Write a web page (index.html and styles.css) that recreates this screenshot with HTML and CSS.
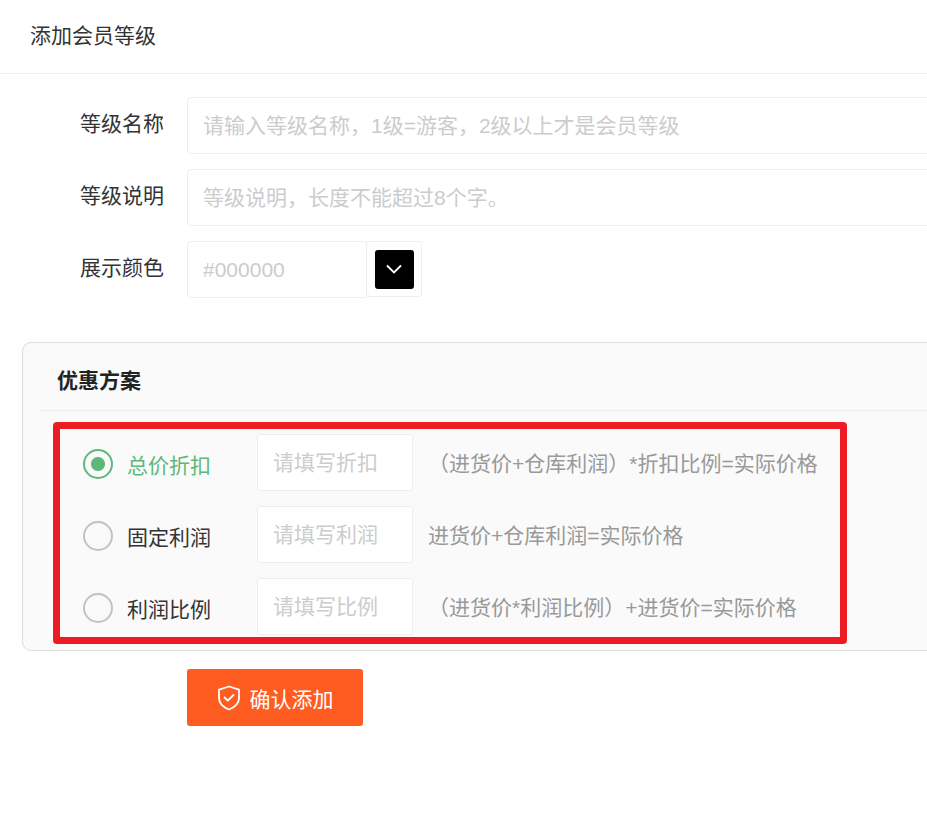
FILE: index.html
```html
<!DOCTYPE html>
<html lang="zh-CN">

<head>
    <meta charset="UTF-8">
    <meta name="viewport" content="width=device-width, initial-scale=1.0">
    <title>添加会员等级</title>
    <link rel="stylesheet" href="styles.css">
</head>

<body>
    <div class="page">
        <div class="page-title">添加会员等级</div>

        <form class="level-form">
            <div class="field">
                <label class="field-label">等级名称</label>
                <input class="text-input" type="text" placeholder="请输入等级名称，1级=游客，2级以上才是会员等级">
            </div>
            <div class="field">
                <label class="field-label">等级说明</label>
                <input class="text-input" type="text" placeholder="等级说明，长度不能超过8个字。">
            </div>
            <div class="field">
                <label class="field-label">展示颜色</label>
                <input class="text-input color-input" type="text" placeholder="#000000">
                <div class="color-picker">
                    <div class="color-swatch">
                        <svg width="16" height="10" viewBox="0 0 16 10" fill="none" stroke="#fff" stroke-width="1.8">
                            <path d="M1 1.5l7 7 7-7" />
                        </svg>
                    </div>
                </div>
            </div>

            <div class="plan-card">
                <div class="plan-title">优惠方案</div>
                <div class="plan-rows">
                    <div class="plan-row">
                        <div class="plan-option active">
                            <span class="radio"></span>
                            <span>总价折扣</span>
                        </div>
                        <input class="text-input plan-input" type="text" placeholder="请填写折扣">
                        <span class="plan-hint">（进货价+仓库利润）*折扣比例=实际价格</span>
                    </div>
                    <div class="plan-row">
                        <div class="plan-option">
                            <span class="radio"></span>
                            <span>固定利润</span>
                        </div>
                        <input class="text-input plan-input" type="text" placeholder="请填写利润">
                        <span class="plan-hint">进货价+仓库利润=实际价格</span>
                    </div>
                    <div class="plan-row">
                        <div class="plan-option">
                            <span class="radio"></span>
                            <span>利润比例</span>
                        </div>
                        <input class="text-input plan-input" type="text" placeholder="请填写比例">
                        <span class="plan-hint">（进货价*利润比例）+进货价=实际价格</span>
                    </div>
                </div>
                <div class="highlight-box"></div>
            </div>

            <button class="submit-button" type="button">
                <svg width="24" height="26" viewBox="0 0 24 26" fill="none" stroke="#fff" stroke-width="1.8" stroke-linejoin="round" stroke-linecap="round">
                    <path d="M12 1.5l10 3.2v8.3c0 5.6-4.6 9.4-10 11.5C6.6 22.400 2 18.600 2 13V4.700z" />
                    <path d="M7.500 12.500l3.300 3.200 5.700-5.700" />
                </svg>
                <span>确认添加</span>
            </button>
        </form>
    </div>
</body>

</html>
```

FILE: styles.css
```css
* {
    margin: 0;
    padding: 0;
    box-sizing: border-box;
}

body {
    font-family: "Liberation Sans", "Noto Sans CJK SC", sans-serif;
    font-size: 21px;
    color: #333;
    background: #fff;
    overflow: hidden;
}

.page {
    width: 1200px;
}

.page-title {
    height: 74px;
    padding-left: 30px;
    line-height: 71px;
    border-bottom: 1px solid #eee;
}

.level-form {
    padding-top: 23px;
}

.field {
    display: flex;
    margin-bottom: 15px;
}

.field-label {
    width: 164px;
    margin-right: 23px;
    text-align: right;
    line-height: 54px;
}

.text-input {
    height: 57px;
    flex: 1;
    padding: 0 15px;
    font-family: inherit;
    font-size: 21px;
    color: #333;
    background: #fff;
    border: 1px solid #eee;
    border-radius: 3px;
    outline: none;
}

.text-input::placeholder {
    color: #ccc;
    opacity: 1;
}

.color-input {
    flex: none;
    width: 180px;
}

.color-picker {
    display: flex;
    justify-content: center;
    align-items: center;
    width: 56px;
    height: 56px;
    margin-left: -1px;
    border: 1px solid #eee;
    border-radius: 3px;
}

.color-swatch {
    display: flex;
    justify-content: center;
    align-items: center;
    width: 39px;
    height: 39px;
    background: #000;
    border-radius: 3px;
}

.plan-card {
    position: relative;
    margin: 44px 0 0 22px;
    background: #fafafa;
    border: 1px solid #ddd;
    border-radius: 9px;
    padding-bottom: 15px;
}

.plan-title {
    height: 68px;
    margin-left: 15px;
    padding-left: 19px;
    line-height: 76px;
    font-weight: bold;
    color: #222;
    border-bottom: 1px solid #eee;
}

.plan-rows {
    display: flex;
    flex-direction: column;
    gap: 15px;
    padding-top: 23px;
}

.plan-row {
    display: flex;
    align-items: center;
}

.plan-option {
    display: flex;
    align-items: center;
    gap: 14px;
    width: 174px;
    margin-left: 60px;
    margin-top: 3px;
}

.plan-option.active {
    color: #5fb878;
}

.radio {
    width: 30px;
    height: 30px;
    border: 2px solid #c2c2c2;
    border-radius: 50%;
}

.active .radio {
    border-color: #5fb878;
    background: radial-gradient(circle, #5fb878 0 6.500px, transparent 7.500px);
}

.plan-input {
    flex: none;
    width: 156px;
}

.plan-hint {
    margin-left: 15px;
    margin-top: -2px;
    color: #999;
}

.highlight-box {
    position: absolute;
    left: 30px;
    top: 79px;
    width: 794px;
    height: 222px;
    border: 7px solid #ed1c24;
    border-radius: 4px;
}

.submit-button {
    display: flex;
    justify-content: center;
    align-items: center;
    gap: 9px;
    width: 176px;
    height: 57px;
    margin: 18px 0 0 187px;
    font-family: inherit;
    font-size: 21px;
    color: #fff;
    background: #ff5c21;
    border: none;
    border-radius: 3px;
}
```
